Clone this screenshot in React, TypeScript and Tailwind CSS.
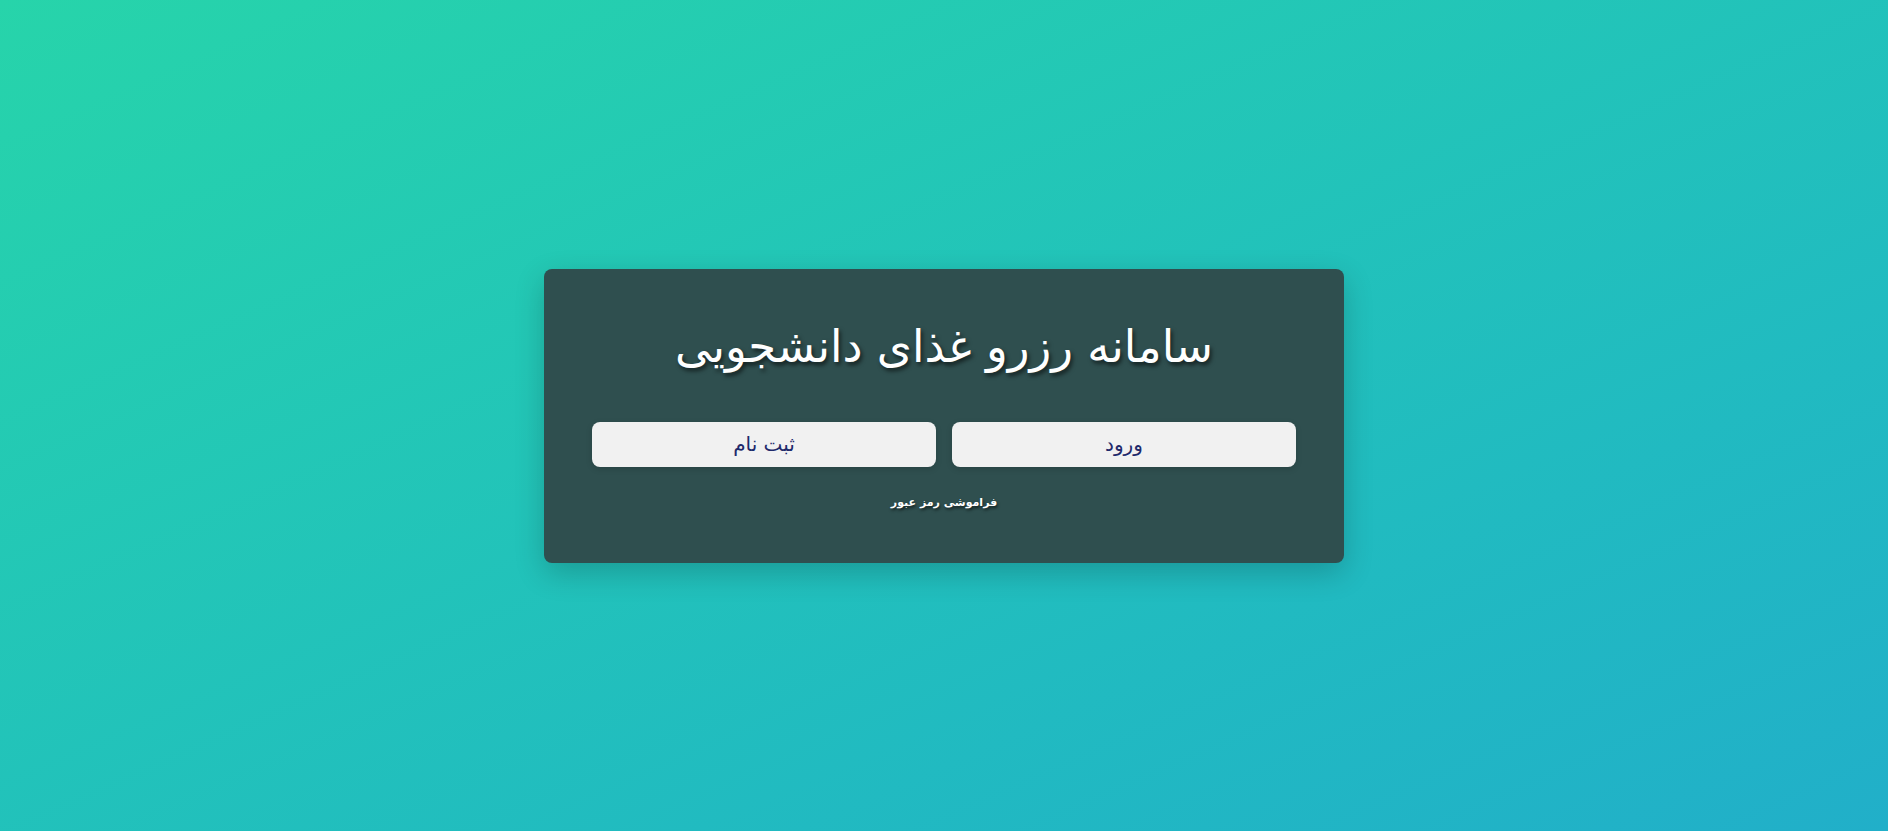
export default function App() {
  return (
    <div
      dir="rtl"
      className="min-h-screen w-full flex items-center justify-center bg-gradient-to-br from-[#27d4aa] to-[#21afc9]"
      style={{ fontFamily: '"DejaVu Sans", sans-serif' }}
    >
      <div className="w-[800px] bg-[#2f4f4f] rounded-lg px-12 pt-12 pb-[50px] shadow-[0_10px_30px_rgba(0,0,0,0.2)] flex flex-col items-center">
        <h1 className="text-[45px] leading-[60px] text-white [text-shadow:2px_3px_4px_rgba(0,0,0,0.6)] mb-[45px]">
          سامانه رزرو غذای دانشجویی
        </h1>

        <div className="w-full grid grid-cols-2 gap-4">
          <button className="h-[45px] rounded-lg bg-[#f1f1f1] text-[#1f2a6b] text-[20px] shadow-[0_2px_6px_rgba(0,0,0,0.15)]">
            ورود
          </button>
          <button className="h-[45px] rounded-lg bg-[#f1f1f1] text-[#1f2a6b] text-[20px] shadow-[0_2px_6px_rgba(0,0,0,0.15)]">
            ثبت نام
          </button>
        </div>

        <a className="mt-[26px] text-[11px] leading-5 font-bold text-white [text-shadow:1px_2px_3px_rgba(0,0,0,0.6)]">
          فراموشی رمز عبور
        </a>
      </div>
    </div>
  );
}
